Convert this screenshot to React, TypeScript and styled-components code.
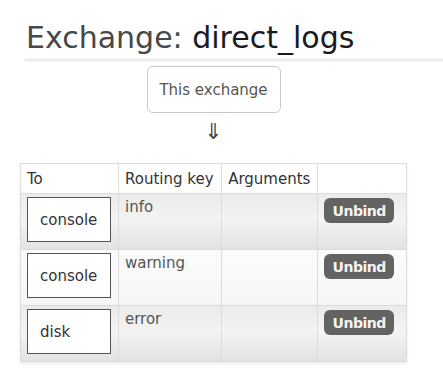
import React from 'react';
import styled, { createGlobalStyle } from 'styled-components';

const GlobalStyle = createGlobalStyle`
  html, body {
    margin: 0;
    padding: 0;
    background: #fff;
  }
  body {
    font-family: "DejaVu Sans", Verdana, sans-serif;
    color: #444;
  }
`;

const Page = styled.div`
  width: 443px;
  height: 372px;
  overflow: hidden;
`;

const Title = styled.h1`
  margin: 0;
  padding: 20px 0 0 26px;
  font-size: 30px;
  line-height: 36px;
  font-weight: normal;
  color: #484848;
`;

const Name = styled.span`
  color: #1a1a22;
`;

const Divider = styled.div`
  margin: 2px 0 0 24px;
  height: 4px;
  background: linear-gradient(to bottom, #f7f7f7, #ececec 60%, #f6f6f6);
  border-radius: 2px;
`;

const Binding = styled.div`
  width: 387px;
  margin: 0 0 0 20px;
  display: flex;
  flex-direction: column;
  align-items: center;
`;

const SourceBox = styled.div`
  margin-top: 4px;
  width: 132px;
  height: 45px;
  border: 1px solid #c8c8c8;
  border-radius: 6px;
  display: flex;
  align-items: center;
  justify-content: center;
  font-size: 15px;
  color: #555;
`;

const Arrow = styled.div`
  margin-top: 6px;
  height: 26px;
  font-size: 22px;
  line-height: 26px;
  color: #444;
`;

const Table = styled.table`
  margin-top: 18px;
  width: 387px;
  border-collapse: collapse;
  border: 1px solid #dcdcdc;
  box-shadow: 0 2px 3px rgba(0, 0, 0, 0.08);
  font-size: 15px;
  color: #555;
`;

const Th = styled.th<{ $w: number }>`
  width: ${(p) => p.$w}px;
  height: 30px;
  padding: 0 6px;
  box-sizing: border-box;
  border: 1px solid #dcdcdc;
  background: #fff;
  text-align: left;
  font-weight: normal;
  line-height: 18px;
  color: #333;
  vertical-align: middle;
`;

const Row = styled.tr<{ $alt: boolean }>`
  height: 56px;
  background: ${(p) =>
    p.$alt
      ? 'linear-gradient(to bottom, #fbfbfb, #f6f6f6)'
      : 'linear-gradient(to bottom, #ebebeb, #f3f3f3 45%, #e2e2e2)'};
`;

const Td = styled.td`
  border: 1px solid #dcdcdc;
  padding: 4px 6px;
  vertical-align: top;
  line-height: 18px;
`;

const BoxCell = styled(Td)`
  padding: 3px 6px 0 6px;
`;

const Queue = styled.div`
  width: 84px;
  height: 45px;
  border: 1.5px solid #555;
  background: #fff;
  display: flex;
  align-items: center;
  padding-left: 12px;
  box-sizing: border-box;
  color: #333;
  font-size: 15px;
`;

const ButtonCell = styled(Td)`
  padding: 4px 6px;
`;

const UnbindButton = styled.button`
  width: 70px;
  height: 25px;
  border: none;
  border-radius: 6px;
  background: #636363;
  color: #f4f4f4;
  font-family: "DejaVu Sans", Verdana, sans-serif;
  font-weight: bold;
  font-size: 14px;
  letter-spacing: -0.5px;
  padding: 0;
  cursor: pointer;
`;

const bindings = [
  { to: 'console', key: 'info' },
  { to: 'console', key: 'warning' },
  { to: 'disk', key: 'error' },
];

export default function App() {
  return (
    <Page>
      <GlobalStyle />
      <Title>
        Exchange: <Name>direct_logs</Name>
      </Title>
      <Divider />
      <Binding>
        <SourceBox>This exchange</SourceBox>
        <Arrow>⇓</Arrow>
        <Table>
          <thead>
            <tr>
              <Th $w={98}>To</Th>
              <Th $w={104}>Routing key</Th>
              <Th $w={96}>Arguments</Th>
              <Th $w={89}></Th>
            </tr>
          </thead>
          <tbody>
            {bindings.map((b, i) => (
              <Row key={i} $alt={i % 2 === 1}>
                <BoxCell>
                  <Queue>{b.to}</Queue>
                </BoxCell>
                <Td>{b.key}</Td>
                <Td></Td>
                <ButtonCell>
                  <UnbindButton>Unbind</UnbindButton>
                </ButtonCell>
              </Row>
            ))}
          </tbody>
        </Table>
      </Binding>
    </Page>
  );
}
